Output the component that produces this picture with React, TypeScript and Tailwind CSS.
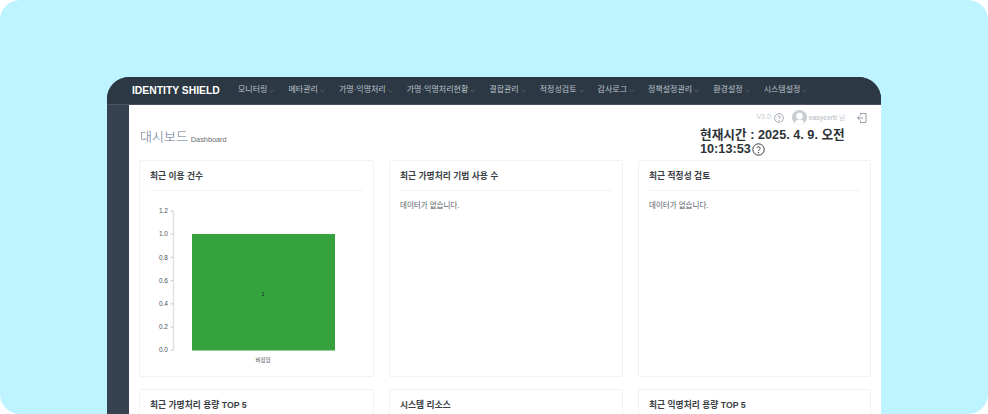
import React from "react";

const font = { fontFamily: '"Liberation Sans", "Noto Sans CJK KR", sans-serif' };
const menu = ["모니터링", "메타관리", "가명·익명처리", "가명·익명처리현황", "결합관리", "적정성검토", "감사로그", "정책설정관리", "환경설정", "시스템설정"];

function Help({ size, color }: { size: number; color: string }) {
  return (
    <svg width={size} height={size} viewBox="0 0 24 24" fill="none" stroke={color} strokeWidth="1.8" className="shrink-0">
      <circle cx="12" cy="12" r="10.5" />
      <path d="M8.8 9.2a3.3 3.3 0 0 1 6.4.8c0 2.2-3.2 2.6-3.2 4.6" />
      <circle cx="12" cy="18" r="0.6" fill={color} />
    </svg>
  );
}

function Chevron() {
  return (
    <svg width="5" height="4" viewBox="0 0 6 4" fill="none" stroke="#77828e" strokeWidth="0.7" className="ml-[2px] mt-[1px]">
      <path d="M0.5 0.8 3 3.2 5.5 0.8" />
    </svg>
  );
}

function Card({ title, children }: { title: string; children?: React.ReactNode }) {
  return (
    <div className="flex h-[217px] flex-col rounded-[2px] border border-[#f1f2f3] bg-white px-[10px]">
      <div className="h-[30px] shrink-0 border-b border-[#f3f4f5] pt-[9px] text-[8.75px] leading-[12px] font-bold text-[#3a3f45]">{title}</div>
      {children}
    </div>
  );
}

function Empty() {
  return <p className="mt-[9px] text-[7.5px] leading-[11px] text-[#555b62]">데이터가 없습니다.</p>;
}

function Chart() {
  const ticks = ["1.2", "1.0", "0.8", "0.6", "0.4", "0.2", "0.0"];
  return (
    <svg width="235" height="186" viewBox="0 0 235 186" className="-ml-[11px] block shrink-0">
      <path d="M34.500 20V159.500" stroke="#dfe1e4" strokeWidth="1.500" />
      {ticks.map((t, i) => {
        const y = 20 + i * 23.2;
        return (
          <g key={t}>
            <path d={`M31.500 ${y}H34`} stroke="#c4b5ac" strokeWidth="0.8" />
            <text x="29" y={y + 2.2} textAnchor="end" fontSize="6.500" fill="#4a4f55" style={font}>{t}</text>
          </g>
        );
      })}
      <rect x="53" y="43" width="143" height="116.500" fill="#36a23e" />
      <text x="124" y="105" textAnchor="middle" fontSize="5.500" fill="#123" style={font}>1</text>
      <text x="124" y="171" textAnchor="middle" fontSize="5.500" fill="#444" style={font}>비정형</text>
    </svg>
  );
}

export default function App() {
  return (
    <div className="h-[414px] w-[988px] overflow-hidden bg-white" style={font}>
      <div className="h-[414px] overflow-hidden rounded-[20px] bg-[#bdf4ff] pl-[107px] pr-[107px] pt-[77px]">
        <div className="flex h-[337px] flex-col overflow-hidden rounded-t-[22px] bg-[#36424f]">
          <header className="flex h-[28px] shrink-0 items-center border-b border-[#4a5460] bg-[#2c3844] pb-[1px]">
            <div className="ml-[25px] w-[106px] shrink-0 text-[11px] font-bold text-white" style={{ transform: "scaleX(0.94)", transformOrigin: "left" }}>IDENTITY SHIELD</div>
            <nav className="flex items-center gap-[14px]">
              {menu.map((m) => (
                <div key={m} className="flex items-center text-[8px] text-[#bcc3cb]">
                  <span>{m}</span>
                  <Chevron />
                </div>
              ))}
            </nav>
          </header>
          <div className="flex min-h-0 flex-1">
            <aside className="w-[22px] shrink-0 bg-[#36424f]" />
            <main className="min-w-0 flex-1 bg-white px-[10px]">
              <div className="relative h-[55px]">
                <div className="absolute left-[1px] top-[23px] flex items-baseline gap-[3px]">
                  <span className="text-[13px] leading-[18px] font-light text-[#5f7690]">대시보드</span>
                  <span className="relative top-[1px] text-[7.300px] text-[#666c73]">Dashboard</span>
                </div>
                <div className="absolute right-[4px] top-[5px] flex items-center text-[7px] text-[#c3c8d0]">
                  <span>V3.0</span>
                  <span className="ml-[3px]"><Help size={10} color="#8c929a" /></span>
                  <span className="ml-[8px] flex h-[15px] w-[15px] items-end justify-center overflow-hidden rounded-full bg-[#c9ccd0]">
                    <svg width="15" height="15" viewBox="0 0 15 15"><circle cx="7.500" cy="6" r="3.200" fill="#fff" /><path d="M2.500 15c0-4 2-5.500 5-5.500s5 1.500 5 5.500z" fill="#fff" /></svg>
                  </span>
                  <span className="ml-[2px] text-[6.500px] font-bold">easycerti</span>
                  <span className="ml-[2px] text-[6.500px]">님</span>
                  <span className="ml-[12px]">
                    <svg width="10" height="10" viewBox="0 0 10 10" fill="none" stroke="#7d8791" strokeWidth="0.8"><path d="M3.500 .5H9V9.500H3.500M3.500 .5V2.500M3.500 9.500V7.500M.5 5H6M.5 5 2.500 3M.5 5 2.500 7" /></svg>
                  </span>
                </div>
                <div className="absolute left-[561px] top-[23px] w-[170px] text-[12.700px] leading-[14px] font-bold text-[#2e3338]">
                  <div>현재시간 : 2025. 4. 9. 오전</div>
                  <div className="flex items-center gap-[1px]">10:13:53 <Help size={13} color="#33383d" /></div>
                </div>
              </div>
              <div className="grid grid-cols-[235px_234px_233px] gap-x-[15px] gap-y-[12px]">
                <Card title="최근 이용 건수"><Chart /></Card>
                <Card title="최근 가명처리 기법 사용 수"><Empty /></Card>
                <Card title="최근 적정성 검토"><Empty /></Card>
                <Card title="최근 가명처리 용량 TOP 5" />
                <Card title="시스템 리소스" />
                <Card title="최근 익명처리 용량 TOP 5" />
              </div>
            </main>
          </div>
        </div>
      </div>
    </div>
  );
}
